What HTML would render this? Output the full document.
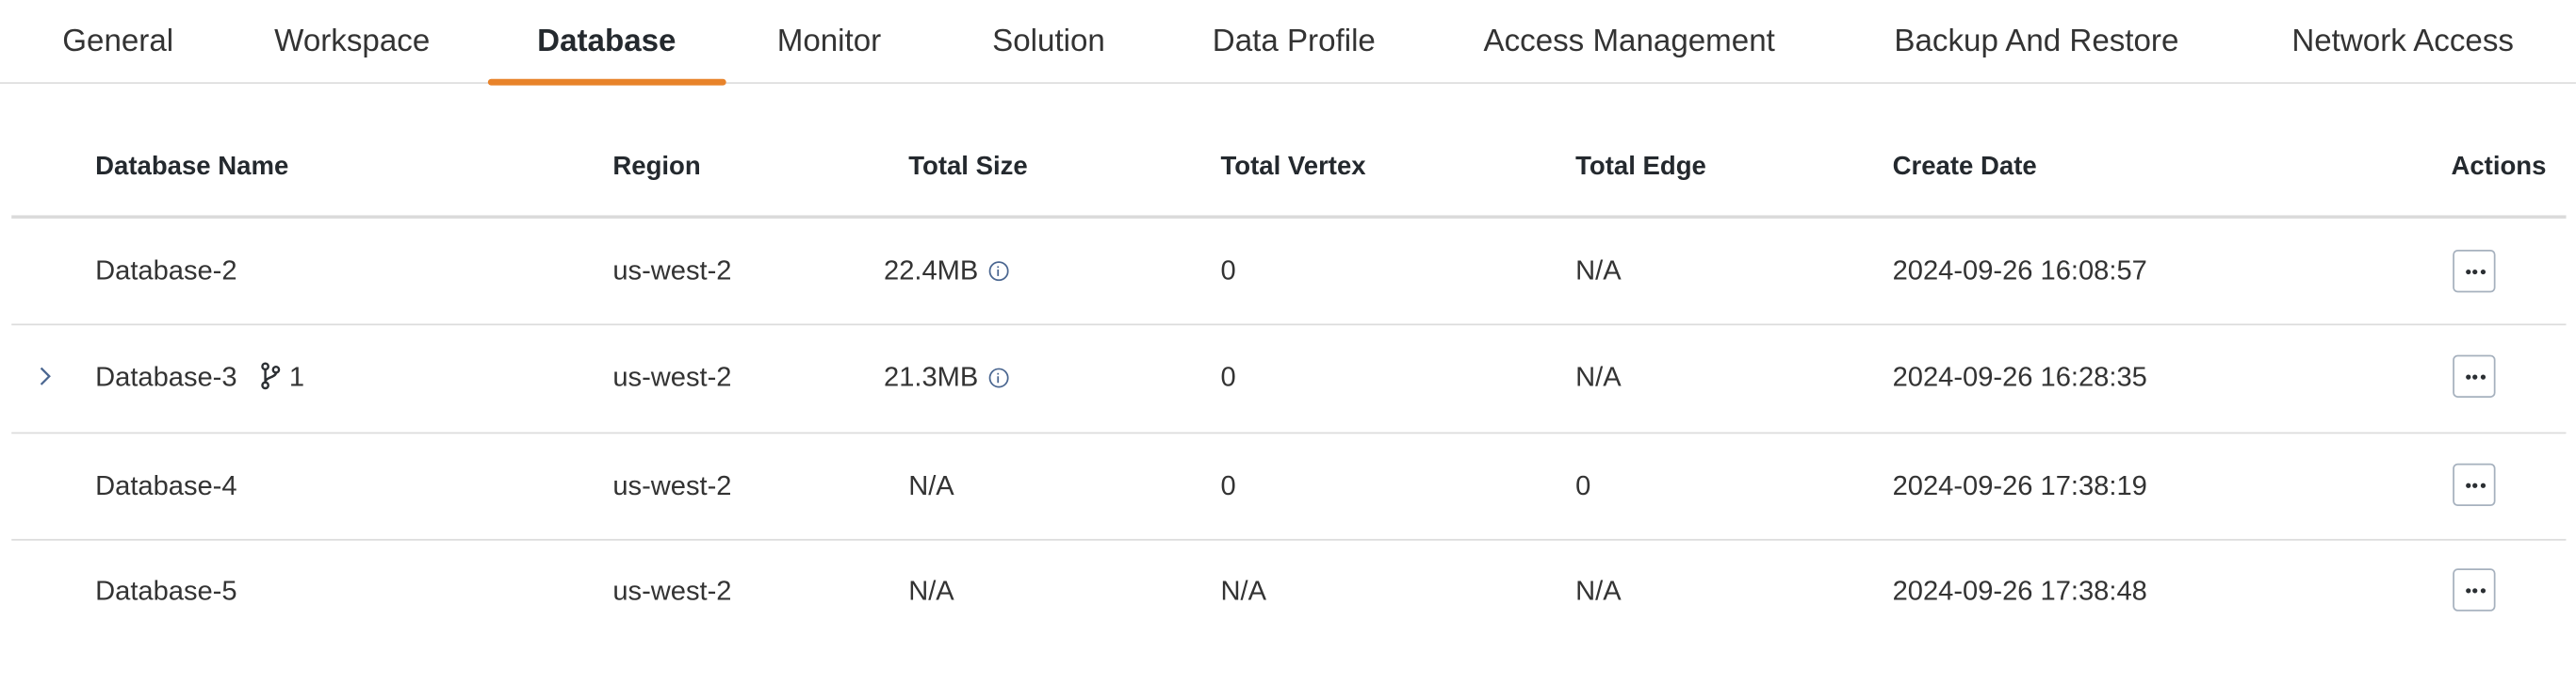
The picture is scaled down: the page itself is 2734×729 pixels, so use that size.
<!DOCTYPE html>
<html><head><meta charset="utf-8"><style>
html,body{margin:0;padding:0;background:#fff;width:2734px;height:728px;overflow:hidden}
#w{position:absolute;left:0;top:0;width:1568px;height:418px;transform:scale(1.7436);transform-origin:0 0;font-family:"Liberation Sans",sans-serif;color:#2b2f33}
.a{position:absolute;white-space:nowrap}
.tab{top:14.5px;font-size:19px;color:#333}
.h{top:93px;font-size:15.8px;font-weight:bold;color:#24292e}
.c{font-size:16.7px;color:#333}
.line{position:absolute;left:7px;width:1555px;height:1px;background:#dcdcdc}
.btn{position:absolute;left:1493px;width:26px;height:26px;border:1.5px solid #a6b1be;border-radius:3px;box-sizing:border-box}
.btn i{position:absolute;top:11px;width:3px;height:3px;border-radius:50%;background:#2b2f33}
.info{display:inline-block;width:12px;height:12px;border:1.2px solid #4a6690;border-radius:50%;position:relative;top:1px;margin-left:6px;box-sizing:border-box}
.info:after{content:"";position:absolute;left:4.2px;top:4.3px;width:1.3px;height:4px;background:#4a6690}
.info:before{content:"";position:absolute;left:4.2px;top:2px;width:1.3px;height:1.3px;background:#4a6690}
</style></head><body><div id="w">
<div class="a tab" style="left:38px">General</div>
<div class="a tab" style="left:167px">Workspace</div>
<div class="a tab" style="left:327px;font-weight:bold;color:#24292e">Database</div>
<div class="a tab" style="left:473px">Monitor</div>
<div class="a tab" style="left:604px">Solution</div>
<div class="a tab" style="left:738px">Data Profile</div>
<div class="a tab" style="left:903px">Access Management</div>
<div class="a tab" style="left:1153px">Backup And Restore</div>
<div class="a tab" style="left:1395px">Network Access</div>
<div style="position:absolute;left:0;top:50px;width:1568px;height:1px;background:#dedede"></div>
<div style="position:absolute;left:297px;top:48px;width:145px;height:4px;border-radius:2px;background:#e8832a"></div>

<div class="a h" style="left:58px">Database Name</div>
<div class="a h" style="left:373px">Region</div>
<div class="a h" style="left:553px">Total Size</div>
<div class="a h" style="left:743px">Total Vertex</div>
<div class="a h" style="left:959px">Total Edge</div>
<div class="a h" style="left:1152px">Create Date</div>
<div class="a h" style="left:1492px">Actions</div>
<div class="line" style="top:131px;height:2px;background:#dadada"></div>

<div class="a c" style="left:58px;top:155px">Database-2</div>
<div class="a c" style="left:373px;top:155px">us-west-2</div>
<div class="a c" style="left:538px;top:155px">22.4MB<span class="info"></span></div>
<div class="a c" style="left:743px;top:155px">0</div>
<div class="a c" style="left:959px;top:155px">N/A</div>
<div class="a c" style="left:1152px;top:155px">2024-09-26 16:08:57</div>
<div class="btn" style="top:152px"><i style="left:6.5px"></i><i style="left:11px"></i><i style="left:15.5px"></i></div>
<div class="line" style="top:197px"></div>

<svg class="a" style="left:22px;top:222px" width="10" height="14" viewBox="0 0 10 14" fill="none" stroke="#4a6690" stroke-width="1.3"><path d="M3 2l5 5-5 5"/></svg>
<div class="a c" style="left:58px;top:220px">Database-3</div>
<svg class="a" style="left:158px;top:220px" width="14" height="18" viewBox="0 0 14 18" fill="none" stroke="#2b2f33" stroke-width="1.4"><circle cx="3.5" cy="3" r="1.8"/><circle cx="3.5" cy="14.5" r="1.8"/><circle cx="10" cy="5" r="1.8"/><path d="M3.5 4.8V12.7M10 6.8c0 3-6.5 2.5-6.5 6"/></svg>
<div class="a c" style="left:176px;top:220px">1</div>
<div class="a c" style="left:373px;top:220px">us-west-2</div>
<div class="a c" style="left:538px;top:220px">21.3MB<span class="info"></span></div>
<div class="a c" style="left:743px;top:220px">0</div>
<div class="a c" style="left:959px;top:220px">N/A</div>
<div class="a c" style="left:1152px;top:220px">2024-09-26 16:28:35</div>
<div class="btn" style="top:216px"><i style="left:6.5px"></i><i style="left:11px"></i><i style="left:15.5px"></i></div>
<div class="line" style="top:263px"></div>

<div class="a c" style="left:58px;top:286px">Database-4</div>
<div class="a c" style="left:373px;top:286px">us-west-2</div>
<div class="a c" style="left:553px;top:286px">N/A</div>
<div class="a c" style="left:743px;top:286px">0</div>
<div class="a c" style="left:959px;top:286px">0</div>
<div class="a c" style="left:1152px;top:286px">2024-09-26 17:38:19</div>
<div class="btn" style="top:282px"><i style="left:6.5px"></i><i style="left:11px"></i><i style="left:15.5px"></i></div>
<div class="line" style="top:328px"></div>

<div class="a c" style="left:58px;top:350px">Database-5</div>
<div class="a c" style="left:373px;top:350px">us-west-2</div>
<div class="a c" style="left:553px;top:350px">N/A</div>
<div class="a c" style="left:743px;top:350px">N/A</div>
<div class="a c" style="left:959px;top:350px">N/A</div>
<div class="a c" style="left:1152px;top:350px">2024-09-26 17:38:48</div>
<div class="btn" style="top:346px"><i style="left:6.5px"></i><i style="left:11px"></i><i style="left:15.5px"></i></div>
</div></body></html>
